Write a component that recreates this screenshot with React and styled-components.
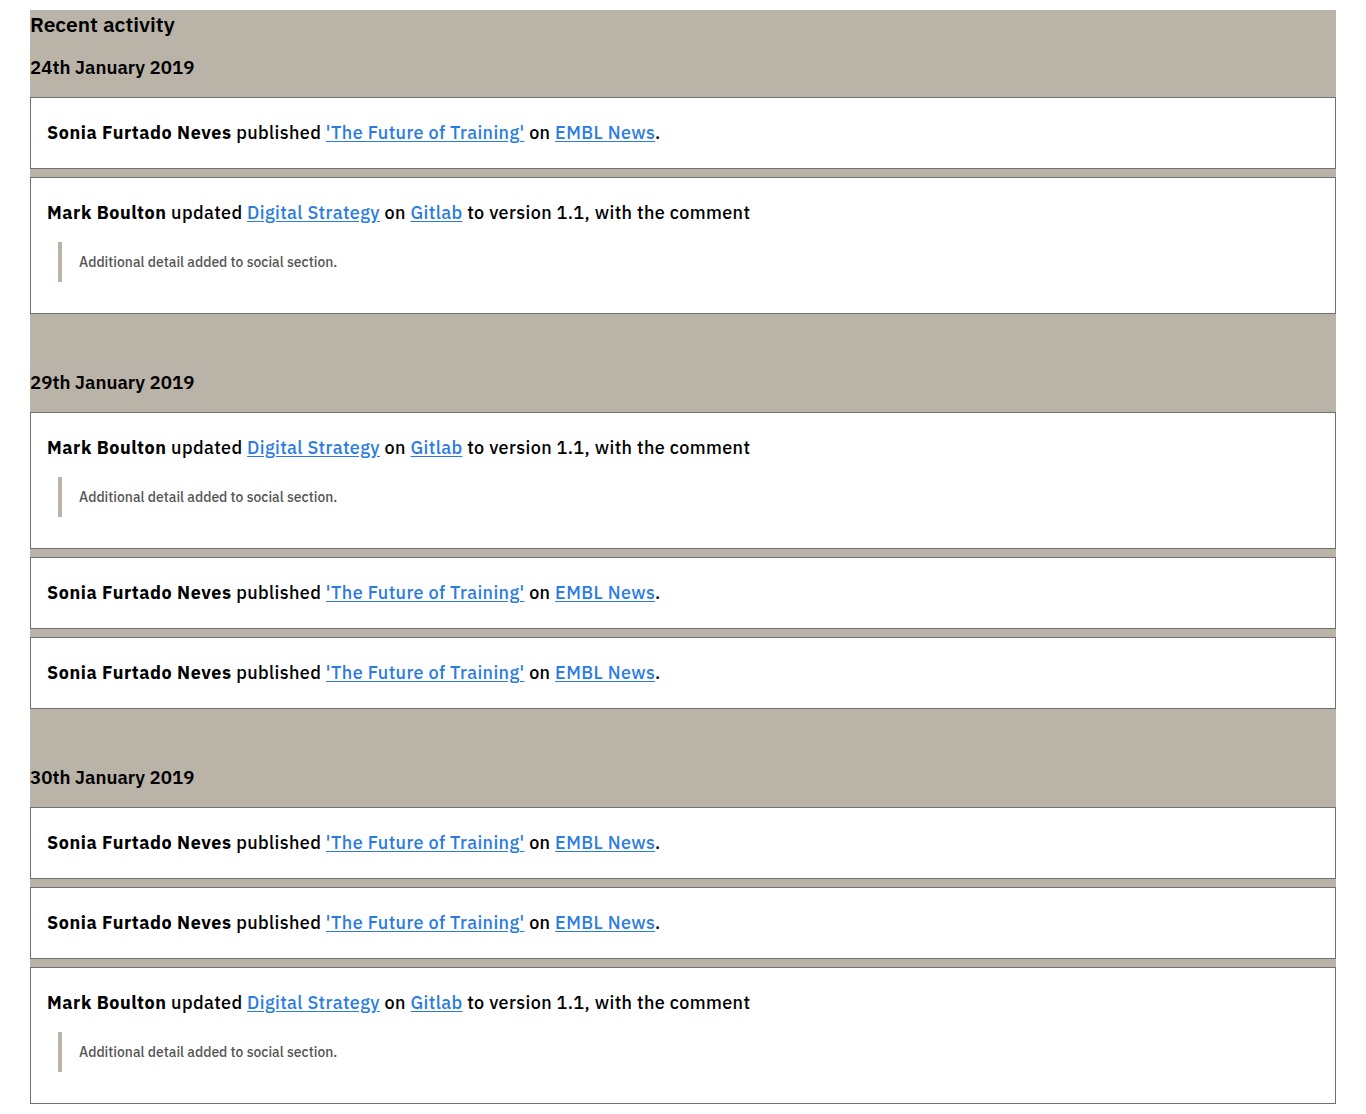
import React from "react";
import styled, { createGlobalStyle } from "styled-components";

const GlobalStyle = createGlobalStyle`
  html, body { margin: 0; padding: 0; background: #ffffff; }
  body { font-family: "IBM Plex Sans", Roboto, "Liberation Sans", sans-serif; color: #000; }
  #root { padding: 10px 30px 0 30px; }
`;

const Panel = styled.section`
  background: #bab3a8;
  display: flex;
  flex-direction: column;
`;

const Title = styled.h2`
  margin: 0;
  font-size: 21px;
  line-height: 28px;
  font-weight: 600;
`;

const DayList = styled.div`
  display: flex;
  flex-direction: column;
  gap: 39px;
`;

const Day = styled.div`
  display: flex;
  flex-direction: column;
`;

const DateHeading = styled.h3`
  margin: 19px 0 20px;
  font-size: 18.7px;
  line-height: 20px;
  font-weight: 600;
`;

const Cards = styled.div`
  display: flex;
  flex-direction: column;
  gap: 8px;
`;

const Card = styled.article`
  background: #fff;
  border: 1px solid #707070;
  padding: 22px 16px;
`;

const Line = styled.p`
  margin: 0;
  font-size: 18px;
  line-height: 26px;
  letter-spacing: 0.38px;
  font-weight: 500;
`;

const Name = styled.strong`
  font-weight: 700;
  letter-spacing: 0.55px;
`;

const Link = styled.a`
  color: #2a7be4;
  text-decoration: underline;
  text-underline-offset: 2px;
`;

const Quote = styled.blockquote`
  margin: 16px 0 9px 11px;
  border-left: 4px solid #bab3a8;
  padding: 0 0 0 17px;
  height: 40px;
  display: flex;
  align-items: center;
  font-size: 13.9px;
  color: #555;
  font-weight: 500;
`;

const Published = () => (
  <Card>
    <Line>
      <Name>Sonia Furtado Neves</Name> published{" "}
      <Link href="#">'The Future of Training'</Link> on{" "}
      <Link href="#">EMBL News</Link>.
    </Line>
  </Card>
);

const Updated = () => (
  <Card>
    <Line>
      <Name>Mark Boulton</Name> updated <Link href="#">Digital Strategy</Link>{" "}
      on <Link href="#">Gitlab</Link> to version 1.1, with the comment
    </Line>
    <Quote>Additional detail added to social section.</Quote>
  </Card>
);

const days = [
  { date: "24th January 2019", items: ["p", "u"] },
  { date: "29th January 2019", items: ["u", "p", "p"] },
  { date: "30th January 2019", items: ["p", "p", "u"] },
];

export default function App() {
  return (
    <>
      <GlobalStyle />
      <Panel>
        <Title>Recent activity</Title>
        <DayList>
          {days.map((d) => (
            <Day key={d.date}>
              <DateHeading>{d.date}</DateHeading>
              <Cards>
                {d.items.map((t, i) =>
                  t === "p" ? <Published key={i} /> : <Updated key={i} />
                )}
              </Cards>
            </Day>
          ))}
        </DayList>
      </Panel>
    </>
  );
}
